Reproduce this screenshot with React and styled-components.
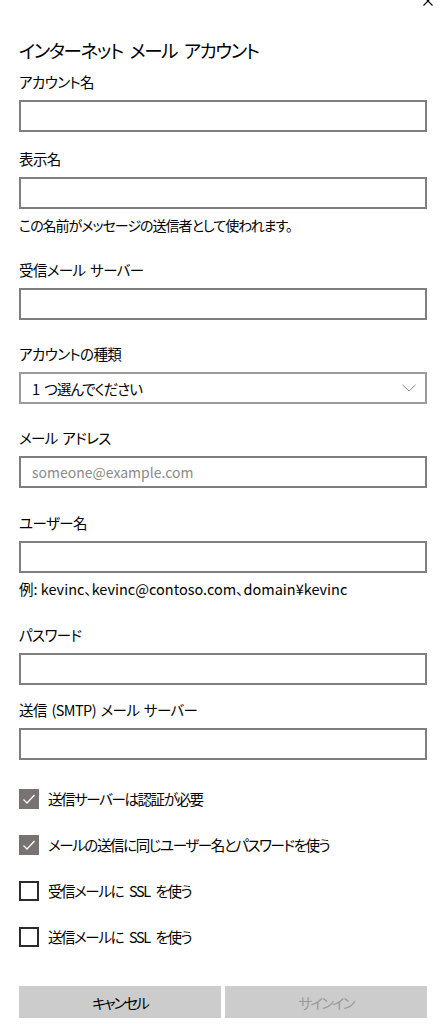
import React from "react";
import styled, { createGlobalStyle } from "styled-components";

const GlobalStyle = createGlobalStyle`
  html, body {
    margin: 0;
    padding: 0;
    background: #ffffff;
  }
  body {
    font-family: "Noto Sans CJK JP", "Noto Sans", sans-serif;
    font-feature-settings: "palt";
    color: #000;
  }
  * { box-sizing: border-box; }
`;

const Page = styled.div`
  width: 445px;
  min-height: 1024px;
  padding: 0 18px 0 19px;
  display: flex;
  flex-direction: column;
  background: #fff;
`;

const Header = styled.div`
  height: 36px;
  display: flex;
  justify-content: flex-end;
  align-items: flex-start;
  margin-right: -6px;
`;

const CloseIcon = styled.svg`
  width: 10px;
  height: 10px;
  margin-top: -4px;
  display: block;
`;

const Title = styled.h1`
  margin: 0;
  font-size: 18.5px;
  line-height: 28px;
  font-weight: 400;
  letter-spacing: -1.4px;
  word-spacing: 4px;
  color: #000;
`;

const Group = styled.div`
  display: flex;
  flex-direction: column;
  margin-top: ${(p) => p.$mt}px;
`;

const Label = styled.label`
  font-size: 14.5px;
  line-height: 20px;
  height: 20px;
  margin-bottom: 8px;
  letter-spacing: -0.6px;
  word-spacing: 2px;
  color: #000;
`;

const TextInput = styled.input`
  width: 100%;
  height: 32px;
  border: 2px solid #7f7f7f;
  background: #fff;
  padding: 0 11px;
  font-family: inherit;
  font-size: 14px;
  color: #000;
  outline: none;
  &::placeholder {
    color: #8a8a8a;
  }
`;

const Help = styled.div`
  font-size: ${(p) => (p.$latin ? "14.5px" : "14px")};
  letter-spacing: ${(p) => (p.$latin ? "0" : "-1px")};
  line-height: 20px;
  margin-top: ${(p) => p.$mt}px;
  color: #000;
`;

const Select = styled.div`
  width: 100%;
  height: 32px;
  border: 2px solid #9a9a9a;
  background: #fff;
  padding: 0 9px 0 11px;
  display: flex;
  align-items: center;
  justify-content: space-between;
  font-size: 14.5px;
  letter-spacing: -1px;
  word-spacing: 3px;
  color: #000;
`;

const Chevron = styled.svg`
  width: 14px;
  height: 8px;
  display: block;
`;

const CheckList = styled.div`
  display: flex;
  flex-direction: column;
  gap: 26px;
  margin-top: 29px;
`;

const CheckRow = styled.label`
  display: flex;
  align-items: center;
  gap: 9px;
  height: 20px;
  font-size: 14.5px;
  line-height: 20px;
  letter-spacing: -1.4px;
  word-spacing: 4px;
  color: #000;
`;

const Box = styled.span`
  width: 20px;
  height: 20px;
  flex: none;
  display: flex;
  align-items: center;
  justify-content: center;
  background: ${(p) => (p.$checked ? "#787271" : "#fff")};
  border: ${(p) => (p.$checked ? "none" : "2px solid #2b2b2b")};
`;

const Buttons = styled.div`
  display: grid;
  grid-template-columns: 1fr 1fr;
  gap: 4px;
  margin-top: 39px;
`;

const Button = styled.button`
  height: 32px;
  border: none;
  background: #cccccc;
  font-family: inherit;
  font-feature-settings: "palt";
  font-size: 14.5px;
  letter-spacing: -2px;
  color: ${(p) => (p.disabled ? "#9a9a9a" : "#000")};
  padding: 0;
`;

function Field({ label, mt, placeholder }) {
  return (
    <Group $mt={mt}>
      <Label>{label}</Label>
      <TextInput type="text" placeholder={placeholder} />
    </Group>
  );
}

function Check({ checked, children }) {
  return (
    <CheckRow>
      <Box $checked={checked}>
        {checked && (
          <svg width="14" height="12" viewBox="0 0 14 12">
            <path d="M1.5 6.5 L5 10 L12.5 2" fill="none" stroke="#fff" strokeWidth="1.3" />
          </svg>
        )}
      </Box>
      <span>{children}</span>
    </CheckRow>
  );
}

export default function App() {
  return (
    <>
      <GlobalStyle />
      <Page>
        <Header>
          <CloseIcon viewBox="0 0 10 10">
            <path d="M0.5 0.5 L9.5 9.5 M9.5 0.5 L0.5 9.5" stroke="#000" strokeWidth="1.1" fill="none" />
          </CloseIcon>
        </Header>
        <Title>インターネット メール アカウント</Title>
        <Field label="アカウント名" mt={8} />
        <Field label="表示名" mt={17} />
        <Help $mt={6}>この名前がメッセージの送信者として使われます。</Help>
        <Field label="受信メール サーバー" mt={25} />
        <Group $mt={24}>
          <Label>アカウントの種類</Label>
          <Select role="combobox">
            <span>1 つ選んでください</span>
            <Chevron viewBox="0 0 14 8">
              <path d="M0.5 0.8 L7 7 L13.5 0.8" fill="none" stroke="#8a8a8a" strokeWidth="1" />
            </Chevron>
          </Select>
        </Group>
        <Field label="メール アドレス" mt={24} placeholder="someone@example.com" />
        <Field label="ユーザー名" mt={25} />
        <Help $mt={6} $latin>例: kevinc、kevinc@contoso.com、domain¥kevinc</Help>
        <Field label="パスワード" mt={26} />
        <Field label="送信 (SMTP) メール サーバー" mt={15} />
        <CheckList>
          <Check checked>送信サーバーは認証が必要</Check>
          <Check checked>メールの送信に同じユーザー名とパスワードを使う</Check>
          <Check>受信メールに SSL を使う</Check>
          <Check>送信メールに SSL を使う</Check>
        </CheckList>
        <Buttons>
          <Button type="button">キャンセル</Button>
          <Button type="button" disabled>サインイン</Button>
        </Buttons>
      </Page>
    </>
  );
}
